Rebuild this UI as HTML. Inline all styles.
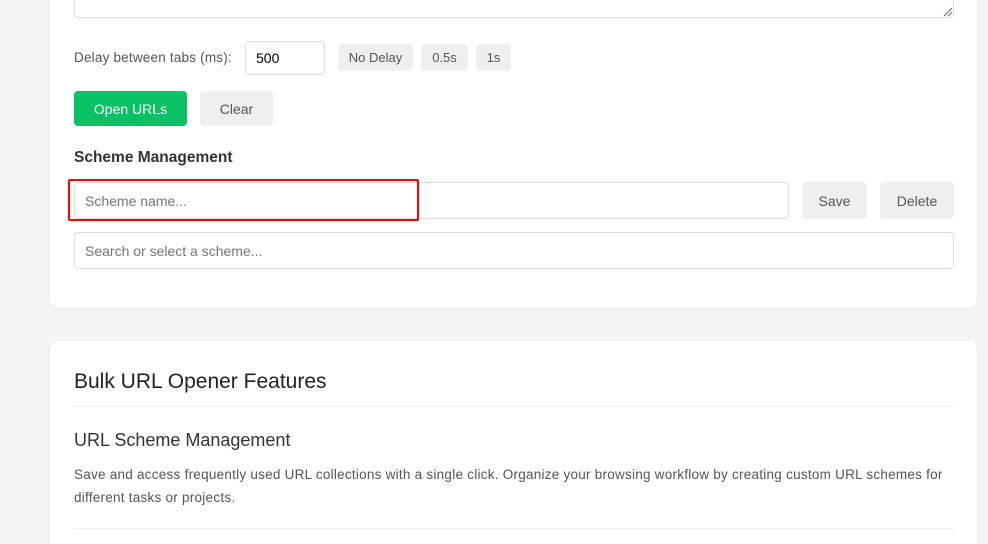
<!DOCTYPE html>
<html><head><meta charset="utf-8"><style>
*{box-sizing:border-box;margin:0;padding:0}
html{width:988px;height:544px;overflow:hidden}
body{width:988px;height:544px;background:#f5f5f5;font-family:"Liberation Sans",sans-serif;position:relative;overflow:hidden;color:#333}
.card{position:absolute;background:#fff;border-radius:8px;box-shadow:0 1px 3px rgba(0,0,0,.06)}
.a{position:absolute;white-space:nowrap}
.inp{position:absolute;border:1px solid #ddd;border-radius:4px;background:#fff;font-size:14px;color:#757575;padding-left:10px;display:flex;align-items:center}
.btn{position:absolute;background:#efefef;border-radius:4px;color:#555;display:flex;align-items:center;justify-content:center}
</style></head><body>
<div class="card" style="left:50px;top:-10px;width:927px;height:318px"></div>
<div class="inp" style="left:74px;top:-10px;width:880px;height:28px"></div>
<svg class="a" style="left:943px;top:7px" width="10" height="10"><path d="M1 9L9 1M5 9L9 5" stroke="#666" stroke-width="1"/></svg>
<div class="a" style="left:74px;top:50px;font-size:13.5px;letter-spacing:0.2px;color:#555">Delay between tabs (ms):</div>
<div class="inp" style="left:245px;top:41px;width:80px;height:34px;color:#000">500</div>
<div class="btn" style="left:338px;top:44px;width:75px;height:27px;font-size:13px">No Delay</div>
<div class="btn" style="left:421px;top:44px;width:47px;height:27px;font-size:13px">0.5s</div>
<div class="btn" style="left:476px;top:44px;width:35px;height:27px;font-size:13px">1s</div>
<div class="btn" style="left:74px;top:91px;width:113px;height:35px;background:#0ac263;color:#fff;font-size:14px">Open URLs</div>
<div class="btn" style="left:200px;top:91px;width:73px;height:35px;font-size:14px">Clear</div>
<div class="a" style="left:74px;top:149px;font-size:15.5px;font-weight:bold;color:#333">Scheme Management</div>
<div class="inp" style="left:74px;top:182px;width:715px;height:37px">Scheme name...</div>
<div class="a" style="left:68px;top:179px;width:351px;height:42px;border:2px solid #f00;border-radius:2px"></div>
<div class="btn" style="left:802px;top:182px;width:65px;height:37px;font-size:14px">Save</div>
<div class="btn" style="left:880px;top:182px;width:74px;height:37px;font-size:14px">Delete</div>
<div class="inp" style="left:74px;top:232px;width:880px;height:37px">Search or select a scheme...</div>
<div class="card" style="left:50px;top:341px;width:927px;height:203px;border-bottom-left-radius:0;border-bottom-right-radius:0"></div>
<div class="a" style="left:74px;top:370px;font-size:21px;color:#222">Bulk URL Opener Features</div>
<div class="a" style="left:74px;top:406px;width:880px;height:1px;background:#eee"></div>
<div class="a" style="left:74px;top:430px;font-size:18px;color:#333">URL Scheme Management</div>
<div class="a" style="left:74px;top:463px;width:890px;font-size:13.5px;letter-spacing:0.25px;line-height:23px;color:#555;white-space:normal">Save and access frequently used URL collections with a single click. Organize your browsing workflow by creating custom URL schemes for<br>different tasks or projects.</div>
<div class="a" style="left:74px;top:528px;width:880px;height:1px;background:#eee"></div>
</body></html>
